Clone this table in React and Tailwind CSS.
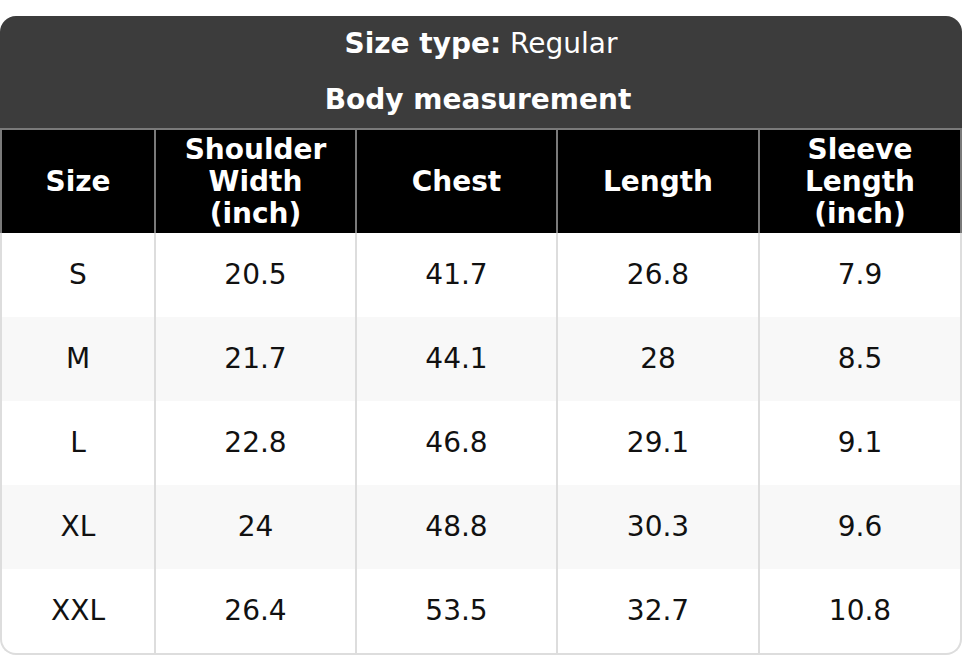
import React from "react";

const rows = [
  ["S", "20.5", "41.7", "26.8", "7.9"],
  ["M", "21.7", "44.1", "28", "8.5"],
  ["L", "22.8", "46.8", "29.1", "9.1"],
  ["XL", "24", "48.8", "30.3", "9.6"],
  ["XXL", "26.4", "53.5", "32.7", "10.8"],
];

const heads = [
  ["Size"],
  ["Shoulder", "Width", "(inch)"],
  ["Chest"],
  ["Length"],
  ["Sleeve", "Length", "(inch)"],
];

export default function App() {
  return (
    <div className="bg-white w-[962px] h-[655px] pt-4" style={{ fontFamily: "'DejaVu Sans', sans-serif" }}>
      <div className="w-[962px] text-[28px]">
        <div className="bg-[#3c3c3c] text-white rounded-t-2xl">
          <div className="h-14 flex items-center justify-center">
            <span className="font-bold">Size type:</span>
            <span className="whitespace-pre"> Regular</span>
          </div>
          <div className="h-14 flex items-center justify-center font-bold pr-[6px]">Body measurement</div>
        </div>
        <div className="grid grid-cols-[154px_201px_201px_202px_204px] bg-black text-white font-bold border-t-2 border-[#7a7a7a]">
          {heads.map((h, i) => (
            <div
              key={i}
              className={`h-[103px] flex flex-col items-center justify-center leading-8 border-l-2 border-[#7a7a7a] ${i === 4 ? "border-r-2" : ""}`}
            >
              {h.map((l, j) => (
                <div key={j}>{l}</div>
              ))}
            </div>
          ))}
        </div>
        {rows.map((r, ri) => {
          const last = ri === rows.length - 1;
          return (
            <div
              key={ri}
              className={`grid grid-cols-[154px_201px_201px_202px_204px] text-[#111] ${ri % 2 === 1 ? "bg-[#f8f8f8]" : "bg-white"} ${last ? "rounded-b-2xl" : ""}`}
            >
              {r.map((c, ci) => (
                <div
                  key={ci}
                  className={`flex items-center justify-center border-l-2 border-[#dddddd] ${ci === 4 ? "border-r-2" : ""} ${last ? "h-[86px] border-b-2" : "h-[84px]"} ${last && ci === 0 ? "rounded-bl-2xl" : ""} ${last && ci === 4 ? "rounded-br-2xl" : ""}`}
                >
                  {c}
                </div>
              ))}
            </div>
          );
        })}
      </div>
    </div>
  );
}
